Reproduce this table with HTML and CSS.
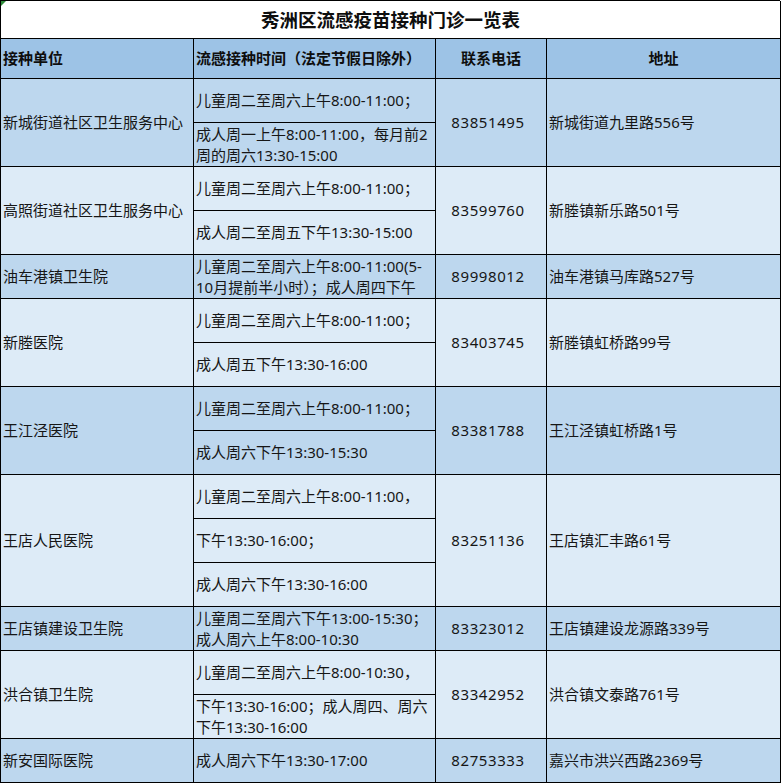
FILE: index.html
```html
<!DOCTYPE html>
<html lang="zh-CN">
<head>
<meta charset="utf-8">
<title>秀洲区流感疫苗接种门诊一览表</title>
<link rel="stylesheet" href="styles.css">
</head>
<body>
<div class="sheet">
  <div class="cell title">秀洲区流感疫苗接种门诊一览表</div>

  <div class="cell head">接种单位</div>
  <div class="cell head">流感接种时间（法定节假日除外）</div>
  <div class="cell head center">联系电话</div>
  <div class="cell head center">地址</div>

  <div class="cell odd span2">新城街道社区卫生服务中心</div>
  <div class="cell odd">儿童周二至周六上午8:00-11:00；</div>
  <div class="cell odd span2 center num">83851495</div>
  <div class="cell odd span2">新城街道九里路556号</div>
  <div class="cell odd">成人周一上午8:00-11:00，每月前2<br>周的周六13:30-15:00</div>

  <div class="cell even span2">高照街道社区卫生服务中心</div>
  <div class="cell even">儿童周二至周六上午8:00-11:00；</div>
  <div class="cell even span2 center num">83599760</div>
  <div class="cell even span2">新塍镇新乐路501号</div>
  <div class="cell even">成人周二至周五下午13:30-15:00</div>

  <div class="cell odd">油车港镇卫生院</div>
  <div class="cell odd">儿童周二至周六上午8:00-11:00(5-<br>10月提前半小时）；成人周四下午</div>
  <div class="cell odd center num">89998012</div>
  <div class="cell odd">油车港镇马库路527号</div>

  <div class="cell even span2">新塍医院</div>
  <div class="cell even">儿童周二至周六上午8:00-11:00；</div>
  <div class="cell even span2 center num">83403745</div>
  <div class="cell even span2">新塍镇虹桥路99号</div>
  <div class="cell even">成人周五下午13:30-16:00</div>

  <div class="cell odd span2">王江泾医院</div>
  <div class="cell odd">儿童周二至周六上午8:00-11:00；</div>
  <div class="cell odd span2 center num">83381788</div>
  <div class="cell odd span2">王江泾镇虹桥路1号</div>
  <div class="cell odd">成人周六下午13:30-15:30</div>

  <div class="cell even span3">王店人民医院</div>
  <div class="cell even">儿童周二至周六上午8:00-11:00，</div>
  <div class="cell even span3 center num">83251136</div>
  <div class="cell even span3">王店镇汇丰路61号</div>
  <div class="cell even">下午13:30-16:00；</div>
  <div class="cell even">成人周六下午13:30-16:00</div>

  <div class="cell odd">王店镇建设卫生院</div>
  <div class="cell odd">儿童周二至周六下午13:00-15:30；<br>成人周六上午8:00-10:30</div>
  <div class="cell odd center num">83323012</div>
  <div class="cell odd">王店镇建设龙源路339号</div>

  <div class="cell even span2">洪合镇卫生院</div>
  <div class="cell even">儿童周二至周六上午8:00-10:30，</div>
  <div class="cell even span2 center num">83342952</div>
  <div class="cell even span2">洪合镇文泰路761号</div>
  <div class="cell even">下午13:30-16:00；成人周四、周六<br>下午13:30-16:00</div>

  <div class="cell odd">新安国际医院</div>
  <div class="cell odd">成人周六下午13:30-17:00</div>
  <div class="cell odd center num">82753333</div>
  <div class="cell odd">嘉兴市洪兴西路2369号</div>
</div>
</body>
</html>
```

FILE: styles.css
```css
html, body {
  margin: 0;
  padding: 0;
  background: #ffffff;
}

body {
  font-family: "Noto Sans", "Noto Sans CJK SC", sans-serif;
  color: #161616;
}

.sheet {
  position: relative;
  width: 780px;
  display: grid;
  grid-template-columns: 193px 242px 111px 234px;
  grid-template-rows: 38px 40px repeat(16, 44px);
  border-left: 1px solid #000;
  border-top: 1px solid #000;
  box-sizing: border-box;
}

.sheet::before {
  content: "";
  position: absolute;
  left: 0;
  top: 0;
  width: 0;
  height: 0;
  border-top: 5px solid #2e8b3a;
  border-right: 5px solid transparent;
}

.cell {
  box-sizing: border-box;
  border-right: 1px solid #000;
  border-bottom: 1px solid #000;
  display: flex;
  align-items: center;
  padding: 0 2px;
  font-size: 15px;
  line-height: 21px;
  white-space: nowrap;
  overflow: hidden;
}

.title {
  grid-column: 1 / span 4;
  justify-content: center;
  font-size: 18.5px;
  font-weight: 700;
  background: #ffffff;
  color: #0e0e0e;
}

.head {
  background: #9dc3e6;
  font-weight: 700;
  color: #0e0e0e;
}

.center {
  justify-content: center;
}

.num {
  letter-spacing: 0.6px;
  padding-right: 8px;
}

.odd {
  background: #bdd7ee;
}

.even {
  background: #ddebf7;
}

.span2 {
  grid-row: span 2;
}

.span3 {
  grid-row: span 3;
}
```
